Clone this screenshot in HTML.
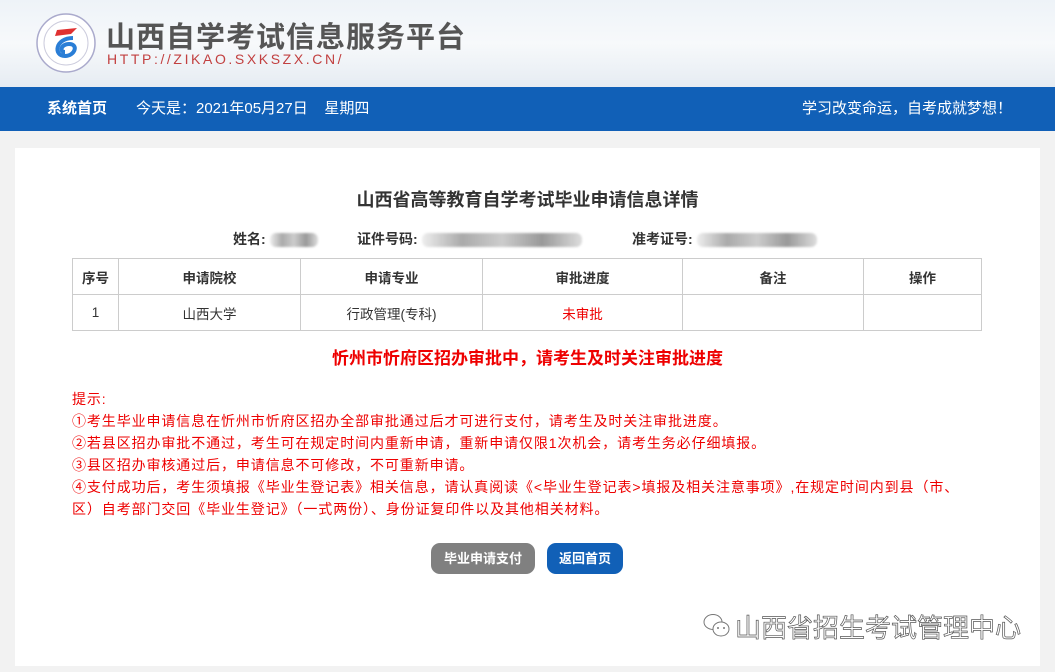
<!DOCTYPE html>
<html><head><meta charset="utf-8"><style>
*{margin:0;padding:0;box-sizing:border-box}
body{width:1055px;height:672px;overflow:hidden;background:#f2f2f2;font-family:"Liberation Sans","Noto Sans CJK SC",sans-serif;position:relative}
.hdr{position:absolute;left:0;top:0;width:1055px;height:87px;background:linear-gradient(180deg,#eef3f8 0%,#f7f9fb 50%,#e6ecf2 100%)}
.bar{position:absolute;left:0;top:87px;width:1055px;height:44px;background:#1160b7;color:#fff;font-size:15px;line-height:44px}
.panel{position:absolute;left:15px;top:148px;width:1025px;height:518px;background:#fff}
.a{position:absolute;white-space:nowrap}
table{position:absolute;left:72px;top:258px;border-collapse:collapse;font-size:13.5px;color:#333}
td,th{border:1px solid #ccc;text-align:center;height:36px}
th{font-weight:bold}
.tips{position:absolute;left:72px;top:388px;color:#e00;font-size:14px;letter-spacing:0.9px;line-height:22px}
.btn{position:absolute;top:543px;height:31px;border-radius:9px;color:#fff;font-size:13px;font-weight:bold;line-height:31px;text-align:center}
.blur{display:inline-block;height:14px;vertical-align:middle;background:linear-gradient(90deg,#eee,#aaa,#ccc,#999,#ddd);border-radius:6px;filter:blur(1px)}
</style></head><body>
<div class="hdr">
<svg class="a" style="left:35px;top:12px" width="62" height="62" viewBox="0 0 62 62"><circle cx="31" cy="31" r="29" fill="#fff" stroke="#aac" stroke-width="1.5"/><circle cx="31" cy="31" r="22" fill="none" stroke="#ccd" stroke-width="1"/><path d="M22 18 L42 16 L36 22 L20 24Z" fill="#e03030"/><path d="M38 26 C20 26 18 44 30 44 C40 44 44 32 34 32 C26 32 24 40 30 40" fill="none" stroke="#2a7ed6" stroke-width="4"/></svg>
<div class="a" style="left:106px;top:14px;font-size:29px;font-weight:bold;color:#555;letter-spacing:1px">山西自学考试信息服务平台</div>
<div class="a" style="left:107px;top:51px;font-size:14px;color:#c24040;letter-spacing:2.6px">HTTP://ZIKAO.SXKSZX.CN/</div>
</div>
<div class="bar"><span class="a" style="left:47px;font-weight:bold">系统首页</span><span class="a" style="left:136px">今天是：2021年05月27日 &nbsp;&nbsp; 星期四</span><span class="a" style="left:802px">学习改变命运，自考成就梦想！</span></div>
<div class="panel"></div>
<div class="a" style="left:0;width:1055px;text-align:center;top:186px;font-size:18px;font-weight:bold;color:#333">山西省高等教育自学考试毕业申请信息详情</div>
<div class="a" style="left:233px;top:229px;font-size:14px;font-weight:bold;color:#333">姓名: <span class="blur" style="width:48px"></span></div>
<div class="a" style="left:357px;top:229px;font-size:14px;font-weight:bold;color:#333">证件号码: <span class="blur" style="width:160px"></span></div>
<div class="a" style="left:632px;top:229px;font-size:14px;font-weight:bold;color:#333">准考证号: <span class="blur" style="width:120px"></span></div>
<table>
<tr><th style="width:46px">序号</th><th style="width:182px">申请院校</th><th style="width:182px">申请专业</th><th style="width:200px">审批进度</th><th style="width:181px">备注</th><th style="width:118px">操作</th></tr>
<tr><td>1</td><td>山西大学</td><td>行政管理(专科)</td><td style="color:#e00">未审批</td><td></td><td></td></tr>
</table>
<div class="a" style="left:0;width:1055px;text-align:center;top:344px;font-size:17px;font-weight:bold;color:#e00">忻州市忻府区招办审批中，请考生及时关注审批进度</div>
<div class="tips">提示:<br>①考生毕业申请信息在忻州市忻府区招办全部审批通过后才可进行支付，请考生及时关注审批进度。<br>②若县区招办审批不通过，考生可在规定时间内重新申请，重新申请仅限1次机会，请考生务必仔细填报。<br>③县区招办审核通过后，申请信息不可修改，不可重新申请。<br>④支付成功后，考生须填报《毕业生登记表》相关信息，请认真阅读《&lt;毕业生登记表&gt;填报及相关注意事项》,在规定时间内到县（市、<br>区）自考部门交回《毕业生登记》（一式两份）、身份证复印件以及其他相关材料。</div>
<div class="btn" style="left:431px;width:104px;background:#808080">毕业申请支付</div>
<div class="btn" style="left:547px;width:76px;background:#1160b7">返回首页</div>
<svg class="a" style="left:702px;top:612px" width="30" height="28" viewBox="0 0 30 28"><ellipse cx="11" cy="10" rx="9" ry="7.5" fill="#fff" stroke="#777"/><ellipse cx="19" cy="17" rx="8" ry="7" fill="#fff" stroke="#777"/><circle cx="16" cy="16" r="1" fill="#777"/><circle cx="22" cy="16" r="1" fill="#777"/></svg>
<div class="a" style="left:735px;top:608px;font-size:26px;color:#fff;-webkit-text-stroke:0.7px #555">山西省招生考试管理中心</div>
</body></html>
